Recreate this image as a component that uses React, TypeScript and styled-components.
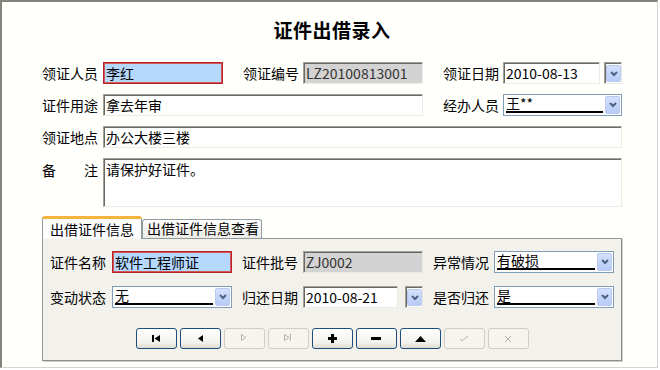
import React from 'react';
import styled, { createGlobalStyle, css } from 'styled-components';

const GlobalStyle = createGlobalStyle`
	html, body {
		margin: 0;
		padding: 0;
		background: #ffffff;
	}
	body {
		font-family: "Noto Sans CJK SC", "Noto Sans", sans-serif;
		font-size: 14px;
		color: #000000;
	}
`;

const Frame = styled.div`
	box-sizing: border-box;
	width: 658px;
	height: 368px;
	border-top: 2px solid #85847a;
	border-left: 2px solid #85847a;
	border-right: 1px solid #d6d4cc;
	border-bottom: 1px solid #d6d4cc;
	background: #fffffc;
	padding-left: 40px;
`;

const Title = styled.h1`
	margin: 0 0 19px 0;
	padding-top: 15px;
	width: 580px;
	text-align: center;
	font-size: 19px;
	line-height: 26px;
	font-weight: bold;
	letter-spacing: 0.5px;
`;

const Form = styled.div`
	display: grid;
	width: 580px;
	grid-template-columns: 61px 120px 80px 120px 80px 119px;
	grid-template-rows: 22px 22px 22px 49px;
	row-gap: 10px;
	align-items: center;
`;

const Label = styled.span<{ $indent?: number; $spread?: boolean; $top?: boolean }>`
	padding-left: ${(p) => p.$indent || 0}px;
	white-space: nowrap;
	line-height: 20px;
	${(p) =>
		p.$spread &&
		css`
			display: flex;
			justify-content: space-between;
			width: 56px;
		`}
	${(p) =>
		p.$top &&
		css`
			align-self: start;
			padding-top: 2px;
		`}
`;

const sunken = css`
	box-sizing: border-box;
	border: 1px solid;
	border-color: #a3a298 #ebeae3 #ebeae3 #a3a298;
	box-shadow: inset 1px 1px 0 #6b6a62;
`;

const TextBox = styled.input<{ $tone?: 'focus' | 'readonly'; $span?: string }>`
	${sunken};
	height: 22px;
	width: 100%;
	margin: 0;
	padding: 0 0 0 2px;
	font-family: "Noto Sans CJK SC", "Noto Sans", sans-serif;
	font-size: 14px;
	color: #000000;
	background: #ffffff;
	outline: none;
	grid-column: ${(p) => p.$span || 'auto'};
	${(p) =>
		p.$tone === 'focus' &&
		css`
			border: 1px solid #b8232b;
			box-shadow: inset 0 0 0 1px #d25658;
			background: #b4d8fe;
		`}
	${(p) =>
		p.$tone === 'readonly' &&
		css`
			background: #d3d3d3;
			color: #333333;
		`}
`;

const Memo = styled.textarea`
	${sunken};
	grid-column: 2 / -1;
	height: 49px;
	width: 100%;
	margin: 0;
	padding: 1px 2px;
	resize: none;
	font-family: "Noto Sans CJK SC", "Noto Sans", sans-serif;
	font-size: 14px;
	line-height: 18px;
	background: #ffffff;
	outline: none;
`;

const DateField = styled.div<{ $gap: number }>`
	display: flex;
	gap: ${(p) => p.$gap}px;
	height: 22px;
`;

const DateButton = styled.div`
	${sunken};
	flex: 0 0 17px;
	height: 22px;
	display: flex;
	padding: 2px 0 1px 1px;
	background: #ffffff;
`;

const ArrowBox = styled.div`
	box-sizing: border-box;
	flex: 0 0 15px;
	width: 15px;
	display: flex;
	align-items: center;
	justify-content: center;
	border: 1px solid #b9c9ef;
	border-radius: 2px;
	background: linear-gradient(#d4e1fc, #b7cbf6);
`;

const Combo = styled.div`
	box-sizing: border-box;
	display: flex;
	align-items: stretch;
	height: 22px;
	border: 1px solid #7f9db9;
	background: #ffffff;
	padding: 1px;
`;

const ComboValue = styled.div`
	flex: 1;
	display: flex;
	align-items: flex-end;
	padding: 0 2px 1px 1px;
	span {
		flex: 1;
		line-height: 16px;
		border-bottom: 2px solid #000000;
	}
`;

const Chevron = () => (
	<svg width="8" height="6" viewBox="0 0 8 6">
		<polyline points="1,1 4,4 7,1" fill="none" stroke="#4d6185" strokeWidth="2" />
	</svg>
);

const Tabs = styled.div`
	display: flex;
	align-items: flex-end;
	margin-top: 9px;
	height: 22px;
	position: relative;
	z-index: 1;
`;

const Tab = styled.div<{ $active?: boolean }>`
	box-sizing: border-box;
	border: 1px solid #919b9c;
	border-bottom: none;
	border-radius: 3px 3px 0 0;
	white-space: nowrap;
	line-height: 17px;
	${(p) =>
		p.$active
			? css`
					width: 100px;
					height: 23px;
					margin-bottom: -1px;
					padding: 2px 0 0 7px;
					border-top: 3px solid #f5b53c;
					background: #fcfcfe;
			  `
			: css`
					width: 120px;
					height: 19px;
					padding: 0 0 0 4px;
					background: linear-gradient(#ffffff, #ecebe5);
			  `}
`;

const Panel = styled.div`
	box-sizing: border-box;
	width: 580px;
	height: 123px;
	border: 1px solid #919b9c;
	border-right-color: #8a8f8f;
	border-bottom-color: #8a8f8f;
	box-shadow: 1px 1px 0 #d0cfc8;
	background: #f2f1ec;
	padding: 12px 0 0 7px;
`;

const PanelGrid = styled.div`
	display: grid;
	grid-template-columns: 62px 120px 71px 120px 71px 120px;
	grid-auto-rows: 22px;
	row-gap: 13px;
	align-items: center;
`;

const Navigator = styled.div`
	display: flex;
	justify-content: center;
	gap: 3px;
	margin: 20px 0 0 -7px;
`;

const NavButton = styled.button<{ $disabled?: boolean }>`
	box-sizing: border-box;
	width: 41px;
	height: 21px;
	margin: 0;
	padding: 0;
	display: flex;
	align-items: center;
	justify-content: center;
	border-radius: 3px;
	${(p) =>
		p.$disabled
			? css`
					border: 1px solid #d0cec3;
					background: #f5f4ef;
			  `
			: css`
					border: 1px solid #1c4d7c;
					background: linear-gradient(#ffffff, #f3f2ec 70%, #dedcd2);
			  `}
`;

const ink = '#000000';
const dim = '#b3b1a5';

const icons: Record<string, React.ReactNode> = {
	first: (
		<svg width="8" height="7" viewBox="0 0 8 7">
			<rect x="0" y="0" width="2" height="7" fill={ink} />
			<polygon points="8,0 2.5,3.5 8,7" fill={ink} />
		</svg>
	),
	prior: (
		<svg width="7" height="7" viewBox="0 0 7 7">
			<polygon points="6,0 1,3.5 6,7" fill={ink} />
		</svg>
	),
	next: (
		<svg width="8" height="9" viewBox="0 0 8 9">
			<polygon points="2,1.5 6.5,4.5 2,7.5" fill="none" stroke="#ffffff" strokeWidth="1" />
			<polygon points="1.5,0.5 6,3.5 1.5,6.5" fill="none" stroke={dim} strokeWidth="1" />
		</svg>
	),
	last: (
		<svg width="10" height="9" viewBox="0 0 10 9">
			<polygon points="1.5,0.5 6,3.5 1.5,6.5" fill="none" stroke={dim} strokeWidth="1" />
			<line x1="7.5" y1="0" x2="7.5" y2="7" stroke={dim} strokeWidth="1" />
			<line x1="8.5" y1="1" x2="8.5" y2="8" stroke="#ffffff" strokeWidth="1" />
		</svg>
	),
	insert: (
		<svg width="9" height="9" viewBox="0 0 9 9">
			<rect x="3" y="0" width="3" height="9" fill={ink} />
			<rect x="0" y="3" width="9" height="3" fill={ink} />
		</svg>
	),
	delete: (
		<svg width="10" height="3" viewBox="0 0 10 3">
			<rect x="0" y="0" width="10" height="3" fill={ink} />
		</svg>
	),
	edit: (
		<svg width="11" height="6" viewBox="0 0 11 6">
			<polygon points="0,6 5.5,0 11,6" fill={ink} />
		</svg>
	),
	post: (
		<svg width="10" height="7" viewBox="0 0 10 7">
			<polyline points="1,4 3,6 9,1" fill="none" stroke={dim} strokeWidth="1" />
		</svg>
	),
	cancel: (
		<svg width="8" height="8" viewBox="0 0 8 8">
			<line x1="1" y1="1" x2="7" y2="7" stroke={dim} strokeWidth="1" />
			<line x1="7" y1="1" x2="1" y2="7" stroke={dim} strokeWidth="1" />
		</svg>
	),
};

const navItems: { key: string; disabled?: boolean }[] = [
	{ key: 'first' },
	{ key: 'prior' },
	{ key: 'next', disabled: true },
	{ key: 'last', disabled: true },
	{ key: 'insert' },
	{ key: 'delete' },
	{ key: 'edit' },
	{ key: 'post', disabled: true },
	{ key: 'cancel', disabled: true },
];

const ComboBox = ({ value }: { value: string }) => (
	<Combo>
		<ComboValue>
			<span>{value}</span>
		</ComboValue>
		<ArrowBox>
			<Chevron />
		</ArrowBox>
	</Combo>
);

const DatePicker = ({ value, gap }: { value: string; gap: number }) => (
	<DateField $gap={gap}>
		<TextBox defaultValue={value} />
		<DateButton>
			<ArrowBox>
				<Chevron />
			</ArrowBox>
		</DateButton>
	</DateField>
);

export default function App() {
	return (
		<>
			<GlobalStyle />
			<Frame>
				<Title>证件出借录入</Title>
				<Form>
					<Label>领证人员</Label>
					<TextBox $tone="focus" defaultValue="李红" />
					<Label $indent={20}>领证编号</Label>
					<TextBox $tone="readonly" readOnly defaultValue="LZ20100813001" />
					<Label $indent={20}>领证日期</Label>
					<DatePicker value="2010-08-13" gap={4} />

					<Label>证件用途</Label>
					<TextBox $span="2 / 5" defaultValue="拿去年审" />
					<Label $indent={20}>经办人员</Label>
					<ComboBox value="王**" />

					<Label>领证地点</Label>
					<TextBox $span="2 / -1" defaultValue="办公大楼三楼" />

					<Label $spread $top>
						<span>备</span>
						<span>注</span>
					</Label>
					<Memo defaultValue="请保护好证件。" />
				</Form>

				<Tabs>
					<Tab $active>出借证件信息</Tab>
					<Tab>出借证件信息查看</Tab>
				</Tabs>
				<Panel>
					<PanelGrid>
						<Label>证件名称</Label>
						<TextBox $tone="focus" defaultValue="软件工程师证" />
						<Label $indent={10}>证件批号</Label>
						<TextBox $tone="readonly" readOnly defaultValue="ZJ0002" />
						<Label $indent={10}>异常情况</Label>
						<ComboBox value="有破损" />

						<Label>变动状态</Label>
						<ComboBox value="无" />
						<Label $indent={10}>归还日期</Label>
						<DatePicker value="2010-08-21" gap={7} />
						<Label $indent={10}>是否归还</Label>
						<ComboBox value="是" />
					</PanelGrid>
					<Navigator>
						{navItems.map((item) => (
							<NavButton key={item.key} $disabled={item.disabled} disabled={item.disabled}>
								{icons[item.key]}
							</NavButton>
						))}
					</Navigator>
				</Panel>
			</Frame>
		</>
	);
}
